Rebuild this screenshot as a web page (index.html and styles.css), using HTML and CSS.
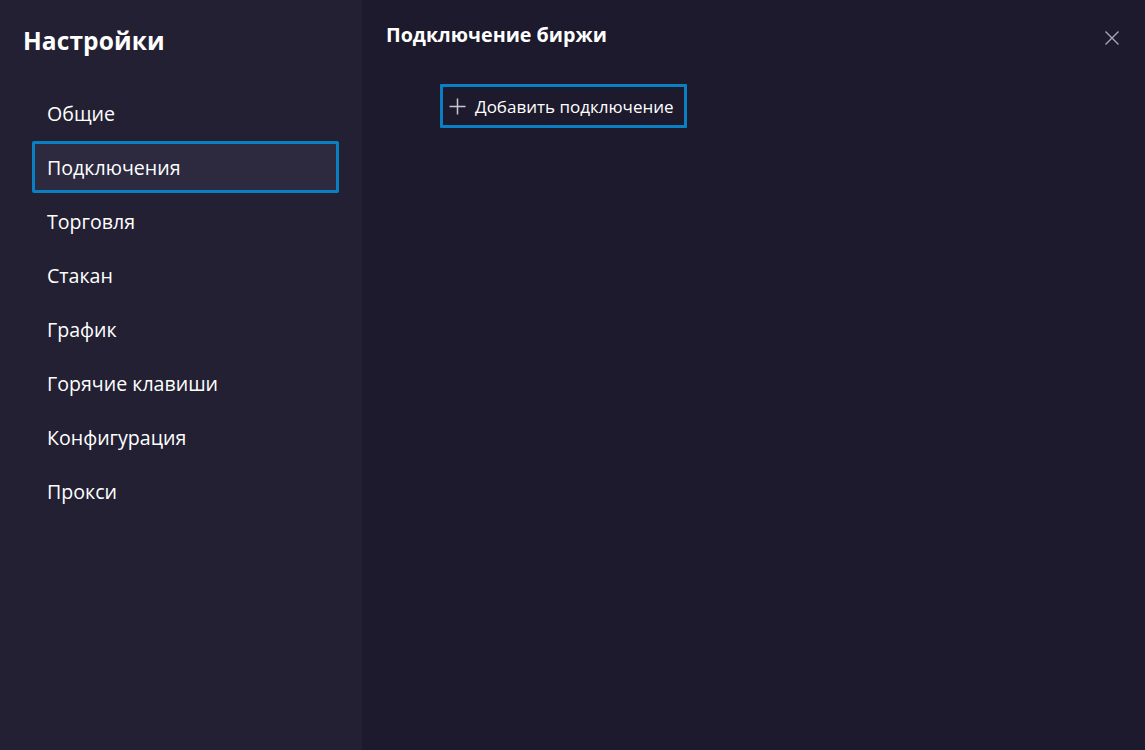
FILE: index.html
```html
<!DOCTYPE html>
<html lang="ru">
<head>
<meta charset="utf-8">
<title>Настройки</title>
<link rel="stylesheet" href="styles.css">
</head>
<body>
<div class="app">
  <aside class="sidebar">
    <h1 class="title">Настройки</h1>
    <nav class="menu">
      <div class="item">Общие</div>
      <div class="item active">Подключения</div>
      <div class="item">Торговля</div>
      <div class="item">Стакан</div>
      <div class="item">График</div>
      <div class="item">Горячие клавиши</div>
      <div class="item">Конфигурация</div>
      <div class="item">Прокси</div>
    </nav>
  </aside>
  <main class="content">
    <div class="header">
      <h2 class="heading">Подключение биржи</h2>
      <button class="close" aria-label="Закрыть">
        <svg width="16" height="16" viewBox="0 0 16 16"><path d="M1.5 1.5 L14.5 14.5 M14.5 1.5 L1.5 14.5" stroke="#a9a7b5" stroke-width="1.4" fill="none"/></svg>
      </button>
    </div>
    <div class="actions">
      <button class="add">
        <svg width="17" height="17" viewBox="0 0 17 17"><path d="M8.5 0.5 V16.5 M0.5 8.5 H16.5" stroke="#c9c8d0" stroke-width="1.5" fill="none"/></svg>
        <span>Добавить подключение</span>
      </button>
    </div>
  </main>
</div>
</body>
</html>
```

FILE: styles.css
```css
* { box-sizing: border-box; }
html, body { margin: 0; padding: 0; height: 100%; }
body {
  font-family: "Open Sans", "Noto Sans", sans-serif;
  color: #ffffff;
  background: #1c1a2c;
}
.app {
  display: flex;
  height: 750px;
}
.sidebar {
  width: 362px;
  flex: 0 0 362px;
  background: #232034;
  padding: 24px 23px 0 32px;
}
.title {
  margin: 0 0 0 -9px;
  font-size: 24.5px;
  font-weight: 700;
  line-height: 34px;
  letter-spacing: 0.1px;
}
.menu {
  display: flex;
  flex-direction: column;
  gap: 2px;
  margin-top: 29px;
}
.item {
  height: 52px;
  display: flex;
  align-items: center;
  padding-left: 12px;
  font-size: 19.6px;
  border: 3px solid transparent;
  border-radius: 2px;
  width: 307px;
}
.item.active {
  background: #2d2a3f;
  border-color: #0a7fc2;
}
.content {
  flex: 1;
  padding: 21px 24px 0 24px;
  position: relative;
}
.header {
  display: flex;
  justify-content: space-between;
  align-items: flex-start;
}
.heading {
  margin: 0;
  font-size: 19.7px;
  font-weight: 700;
  line-height: 28px;
}
.close {
  background: none;
  border: none;
  padding: 0;
  margin-top: 9px;
  margin-right: 1px;
  width: 16px;
  height: 16px;
  cursor: pointer;
}
.actions {
  padding-left: 54px;
  margin-top: 35px;
}
.add {
  display: flex;
  align-items: center;
  gap: 9px;
  height: 44px;
  padding: 0 10px 0 6px;
  background: transparent;
  border: 3px solid #0a7fc2;
  border-radius: 1px;
  color: #ffffff;
  font-family: "Open Sans", "Noto Sans", sans-serif;
  font-size: 17px;
}
```
